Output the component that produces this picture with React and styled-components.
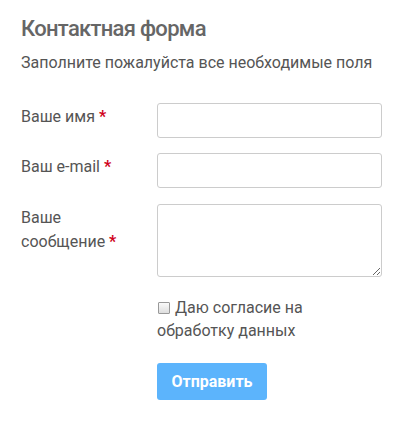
import React from "react";
import styled, { createGlobalStyle } from "styled-components";

const GlobalStyle = createGlobalStyle`
  body {
    margin: 0;
    background: #fff;
    font-family: Roboto, "Liberation Sans", sans-serif;
  }
`;

const Page = styled.div`
  padding: 16px 21px 20px;
  color: #555;
`;

const Title = styled.h2`
  margin: 0;
  font-size: 22px;
  font-weight: 500;
  letter-spacing: -0.7px;
  line-height: 1.2;
  color: #666;
`;

const Subtitle = styled.p`
  margin: 10px 0 28px;
  font-size: 16px;
  line-height: 22.5px;
  color: #555;
`;

const Form = styled.form`
  display: flex;
  flex-direction: column;
`;

const Row = styled.div`
  display: grid;
  grid-template-columns: 136px 225px;
  margin-bottom: ${(p) => p.$gap || 15}px;
`;

const Label = styled.label`
  padding-top: 2px;
  max-width: 110px;
  font-size: 16px;
  line-height: 24px;
  color: #555;
`;

const Star = styled.span`
  color: #d0021b;
  font-weight: 700;
`;

const Input = styled.input`
  box-sizing: border-box;
  width: 100%;
  height: 35px;
  border: 1px solid #ccc;
  border-radius: 3px;
  padding: 6px 10px;
  font: 15px Roboto, sans-serif;
  outline: none;
`;

const TextArea = styled.textarea`
  box-sizing: border-box;
  width: 100%;
  height: 73px;
  border: 1px solid #ccc;
  border-radius: 3px;
  padding: 6px 10px;
  font: 15px Roboto, sans-serif;
  outline: none;
  display: block;
`;

const Consent = styled.label`
  grid-column: 2;
  max-width: 165px;
  font-size: 16px;
  line-height: 23px;
  color: #555;
`;

const Check = styled.input`
  appearance: none;
  width: 12px;
  height: 12px;
  margin: 0 5px 0 1px;
  vertical-align: -1px;
  border: 1px solid #999;
  border-radius: 1px;
  background: linear-gradient(#fafafa, #dedede);
`;

const Submit = styled.button`
  grid-column: 2;
  justify-self: start;
  width: 110px;
  height: 37px;
  border: 0;
  border-radius: 3px;
  background: #5cb4fc;
  color: #fff;
  font: 700 16px Roboto, sans-serif;
  cursor: pointer;
`;

export default function App() {
  return (
    <Page>
      <GlobalStyle />
      <Title>Контактная форма</Title>
      <Subtitle>Заполните пожалуйста все необходимые поля</Subtitle>
      <Form onSubmit={(e) => e.preventDefault()}>
        <Row>
          <Label htmlFor="name">
            Ваше имя <Star>*</Star>
          </Label>
          <Input id="name" type="text" />
        </Row>
        <Row $gap={16}>
          <Label htmlFor="email">
            Ваш e-mail <Star>*</Star>
          </Label>
          <Input id="email" type="email" />
        </Row>
        <Row $gap={19}>
          <Label htmlFor="message">
            Ваше сообщение&nbsp;<Star>*</Star>
          </Label>
          <TextArea id="message" />
        </Row>
        <Row $gap={21}>
          <Consent>
            <Check type="checkbox" />
            Даю согласие на обработку данных
          </Consent>
        </Row>
        <Row>
          <Submit type="submit">Отправить</Submit>
        </Row>
      </Form>
    </Page>
  );
}
